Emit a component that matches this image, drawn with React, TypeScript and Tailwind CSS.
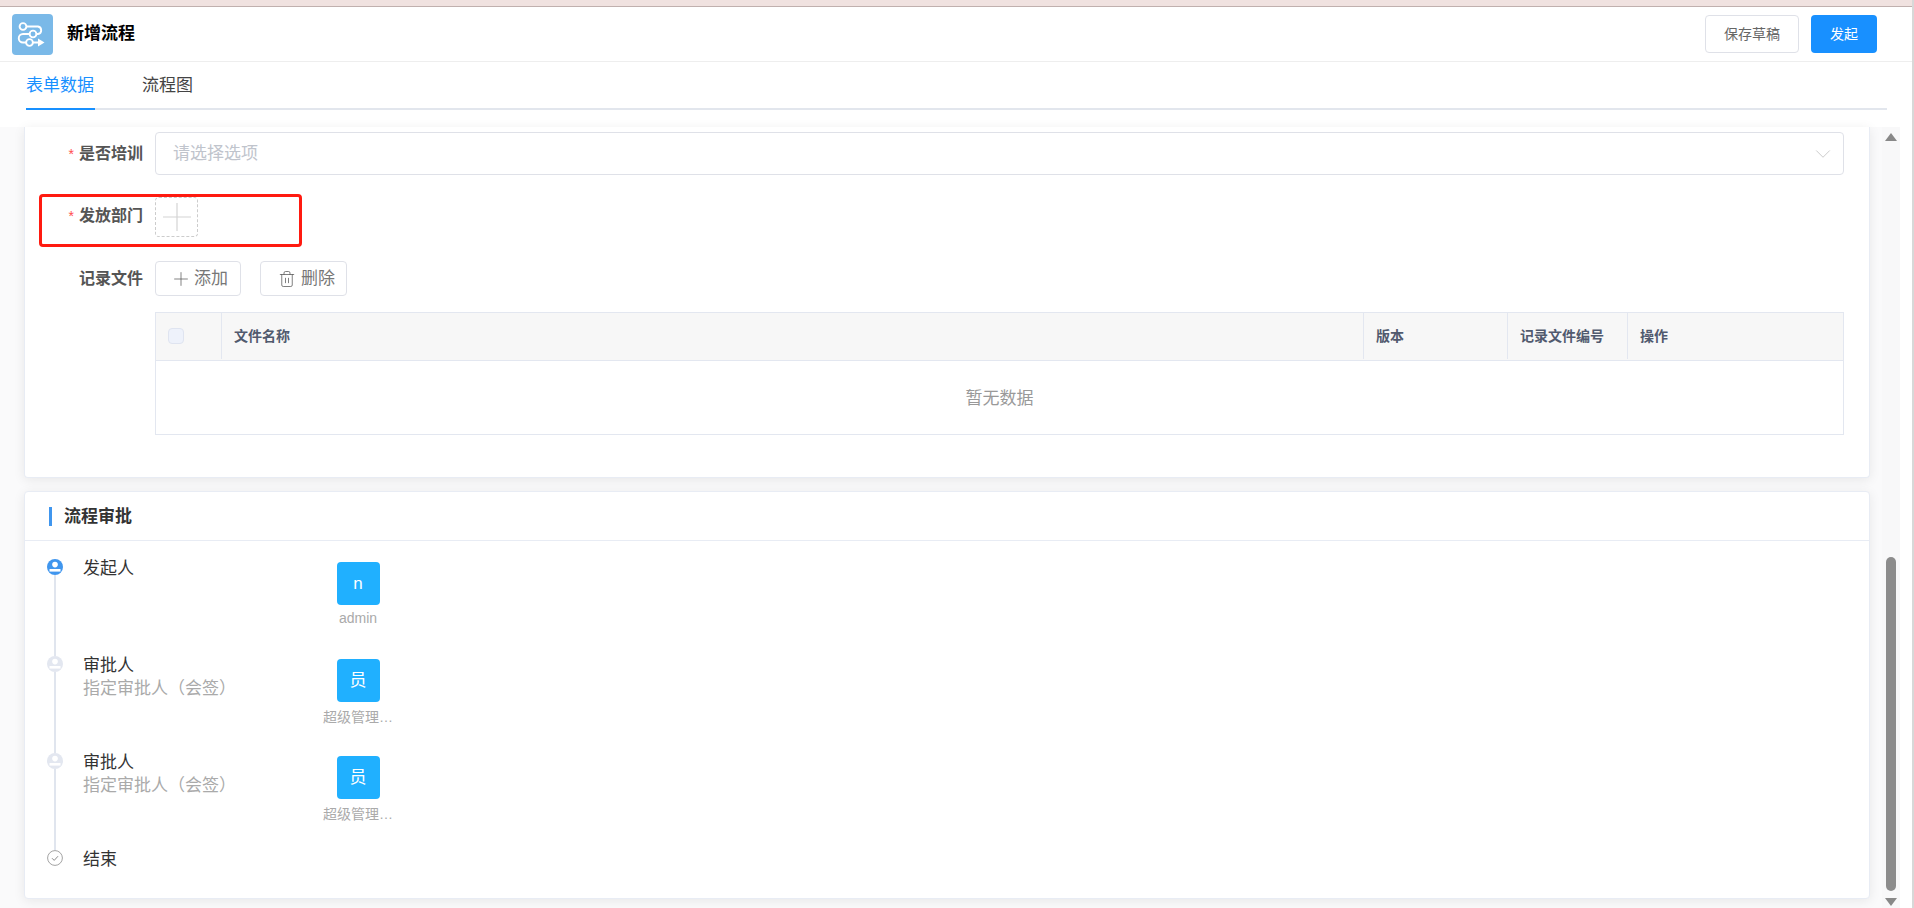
import { Plus, Trash2, ChevronDown } from 'lucide-react'

const columns = [
  { label: '文件名称', className: 'flex-1' },
  { label: '版本', className: 'w-[144px]' },
  { label: '记录文件编号', className: 'w-[120px]' },
  { label: '操作', className: 'w-[215px]' },
]

const steps = [
  { title: '发起人', sub: '', avatar: 'n', name: 'admin', active: true },
  { title: '审批人', sub: '指定审批人（会签）', avatar: '员', name: '超级管理…', active: false },
  { title: '审批人', sub: '指定审批人（会签）', avatar: '员', name: '超级管理…', active: false },
]

function FlowLogo() {
  return (
    <svg viewBox="0 0 41 41" className="w-[41px] h-[41px]" fill="none" stroke="#fff" strokeWidth="1.9">
      <circle cx="11" cy="12.5" r="3.4" />
      <circle cx="21" cy="20" r="3.4" />
      <circle cx="17.5" cy="28.5" r="3.4" />
      <path d="M14.4 12.5H26a3.8 3.8 0 0 1 0 7.5h-1.6M17.6 20H11a4.2 4.2 0 0 0 0 8.5h3.1M20.9 28.5H27" />
      <path d="M26 24.5l6.5 4-6.5 4z" fill="#fff" stroke="none" />
    </svg>
  )
}

function UserDot({ active }: { active: boolean }) {
  const color = active ? '#4096ee' : '#e3e7f0'
  return (
    <svg viewBox="0 0 16 16" className="w-4 h-4">
      <circle cx="8" cy="8" r="8" fill={color} />
      <circle cx="8" cy="5.6" r="2.8" fill="#fff" />
      <path d="M2.5 10h11v2.6h-11z" fill="#fff" />
    </svg>
  )
}

function DoneDot() {
  return (
    <svg viewBox="0 0 16 16" className="w-4 h-4" fill="none">
      <circle cx="8" cy="8" r="7.4" stroke="#a3a3a3" strokeWidth="1" />
      <path d="M5 8.2l2.2 2.2L11 6.2" stroke="#8c8c8c" strokeWidth="1" />
    </svg>
  )
}

export default function App() {
  return (
    <div className="h-[908px] w-full overflow-hidden flex flex-col bg-white border-r-2 border-[#d8d8d8] text-[#333] font-['Liberation_Sans','Noto_Sans_CJK_SC',sans-serif]">
      <div className="h-[7px] shrink-0 bg-[#f0e2e0] border-b border-[#c0b0ae]" />

      {/* 顶部标题 */}
      <div className="h-[55px] shrink-0 flex items-center border-b border-[#eeeeee] pl-3 pr-[35px]">
        <div className="w-[41px] h-[41px] rounded bg-[#7ab9e8]">
          <FlowLogo />
        </div>
        <h1 className="ml-[14px] flex-1 text-[17px] font-bold text-black">新增流程</h1>
        <button className="w-[94px] h-[38px] rounded border border-[#dfe1e8] text-sm text-[#666]">保存草稿</button>
        <button className="ml-3 w-[66px] h-[38px] rounded bg-[#1890ff] text-sm text-white">发起</button>
      </div>

      {/* tabs */}
      <div className="h-[48px] shrink-0 ml-[26px] mr-[25px] flex border-b-2 border-[#e2e6ed]">
        <div className="h-[48px] w-[69px] pt-[2px] border-b-2 border-[#1890ff] text-[17px] text-[#1890ff] flex items-center">表单数据</div>
        <div className="ml-[47px] h-[46px] pt-[2px] text-[17px] text-[#444] flex items-center">流程图</div>
      </div>

      <div className="flex-1 min-h-0 mt-[17px] flex">
        <div className="flex-1 min-w-0 pl-6 pr-[12px] flex flex-col gap-[13px] bg-[#fafafb]">
          {/* 表单 */}
          <div className="h-[351px] shrink-0 bg-white rounded-b border border-t-0 border-[#e8ecf4] shadow-[0_2px_12px_rgba(0,0,0,0.08)] pt-[5px] pl-[130px] pr-[25px]">
            <div className="flex items-center h-[43px]">
              <label className="w-[88px] -ml-[88px] pr-3 text-right text-base font-bold text-[#555] whitespace-nowrap"><span className="text-[#ff4d4f] font-normal mr-[5px] text-sm">*</span>是否培训</label>
              <div className="flex-1 h-[43px] rounded border border-[#dfe1e8] flex items-center justify-between pl-[17px] pr-[7px]">
                <span className="text-[17px] text-[#c0c4cc]">请选择选项</span>
                <ChevronDown size={26} strokeWidth={0.7} className="text-[#bbb]" />
              </div>
            </div>

            <div className="relative flex items-center h-[40px] mt-[22px]">
              <label className="w-[88px] -ml-[88px] pr-3 pb-[2px] text-right text-base font-bold text-[#555] whitespace-nowrap"><span className="text-[#ff4d4f] font-normal mr-[5px] text-sm">*</span>发放部门</label>
              <div className="w-[43px] h-[40px] rounded border border-dashed border-[#cccccc] flex items-center justify-center">
                <svg viewBox="0 0 28 28" className="w-7 h-7" stroke="#d4d4d4" strokeWidth="1.2">
                  <path d="M0 14h28M14 0v28" />
                </svg>
              </div>
              <div className="absolute left-[-116px] top-[-3px] w-[263px] h-[53px] rounded-sm border-[3px] border-[#ff1a10]" />
            </div>

            <div className="flex items-center h-[35px] mt-[24px]">
              <label className="w-[88px] -ml-[88px] pr-3 text-right text-base font-bold text-[#555] whitespace-nowrap">记录文件</label>
              <button className="w-[86px] h-[35px] rounded border border-[#dfe1e8] flex items-center pl-[14px] gap-[2px] text-[17px] text-[#777]">
                <Plus size={22} strokeWidth={0.8} className="text-[#555]" />添加
              </button>
              <button className="ml-[19px] w-[87px] h-[35px] rounded border border-[#dfe1e8] flex items-center pl-[17px] gap-[5px] text-[17px] text-[#777]">
                <Trash2 size={18} strokeWidth={1} className="text-[#555]" />删除
              </button>
            </div>

            <div className="mt-4 border border-[#e3e7f0]">
              <div className="h-[48px] pb-[1px] bg-[#f7f7f7] flex border-b border-[#e3e7f0] text-sm font-bold text-[#515a6e]">
                <div className="w-[66px] shrink-0 border-r border-[#e3e7f0] flex items-center pl-3">
                  <span className="w-4 h-4 rounded-sm border border-[#dfe4f0] bg-[#eef2fb]" />
                </div>
                {columns.map((c, i) => (
                  <div key={c.label} className={`${c.className} flex items-center pl-3 ${i < columns.length - 1 ? 'border-r border-[#e3e7f0]' : ''}`}>{c.label}</div>
                ))}
              </div>
              <div className="h-[73px] pt-[2px] flex items-center justify-center text-[17px] text-[#999]">暂无数据</div>
            </div>
          </div>

          {/* 流程审批 */}
          <div className="h-[408px] shrink-0 bg-white rounded border border-[#e8ecf4] shadow-[0_2px_12px_rgba(0,0,0,0.08)]">
            <div className="h-[49px] pt-[1px] border-b border-[#e8ecf4] flex items-center pl-6">
              <span className="w-[3px] h-[19px] bg-[#4096ee]" />
              <span className="ml-3 text-[17px] font-bold text-[#333]">流程审批</span>
            </div>
            <div className="pl-[22px] pt-[18px]">
              {steps.map((s, i) => (
                <div key={i} className="h-[97px] flex">
                  <div className="w-4 flex flex-col items-center">
                    <UserDot active={s.active} />
                    <div className="w-[2px] flex-1 bg-[#e0e5ee]" />
                  </div>
                  <div className="ml-[20px] w-[240px] text-[17px] leading-[23px] -mt-[2px]">
                    <div className="text-[#333]">{s.title}</div>
                    {s.sub && <div className="text-[#aaa]">{s.sub}</div>}
                  </div>
                  <div className="w-[70px] flex flex-col items-center mt-[3px]">
                    <div className="w-[43px] h-[43px] rounded bg-[#20b0ff] text-white text-[17px] flex items-center justify-center">{s.avatar}</div>
                    <div className={`${s.active ? 'mt-[3px]' : 'mt-[5px]'} text-sm leading-5 text-[#aaa] text-center whitespace-nowrap`}>{s.name}</div>
                  </div>
                </div>
              ))}
              <div className="flex">
                <DoneDot />
                <div className="ml-[20px] text-[17px] leading-[23px] -mt-[2px] text-[#333]">结束</div>
              </div>
            </div>
          </div>
        </div>

        {/* 滚动条 */}
        <div className="w-[18px] shrink-0 bg-[#f8f8f9] flex flex-col items-center pt-[6px] pb-[2px]">
          <span className="w-0 h-0 border-x-[6px] border-x-transparent border-b-[8px] border-b-[#888]" />
          <div className="w-[10px] mt-auto h-[334px] rounded-full bg-[#8c8c8c]" />
          <span className="mt-[7px] w-0 h-0 border-x-[6px] border-x-transparent border-t-[8px] border-t-[#888]" />
        </div>
        <div className="w-[12px] shrink-0 bg-white" />
      </div>
    </div>
  )
}
